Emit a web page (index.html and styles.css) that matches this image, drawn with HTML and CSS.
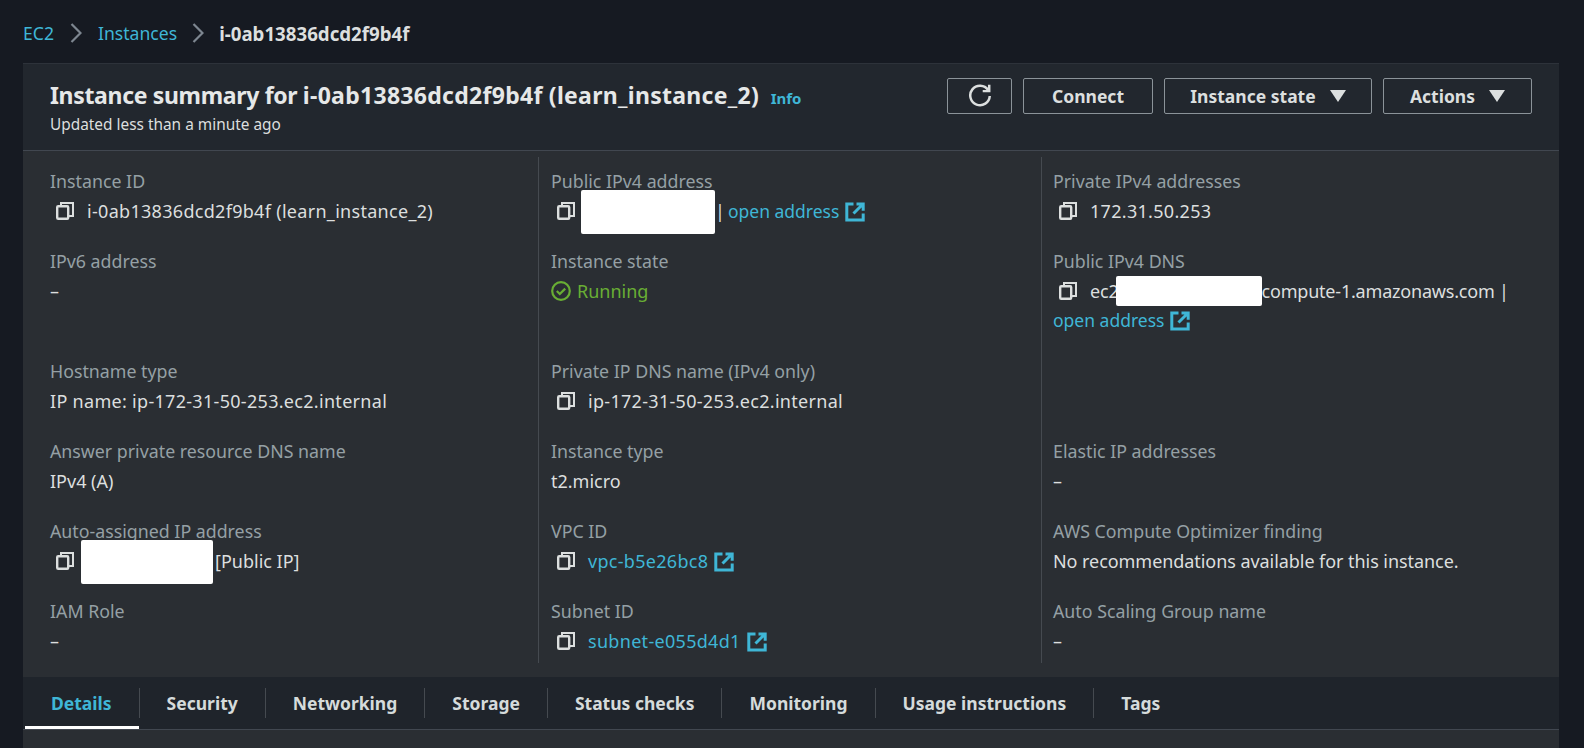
FILE: index.html
```html
<!DOCTYPE html>
<html lang="en">
  <head>
    <title>Instance summary</title>
    <link rel="stylesheet" href="styles.css">
  </head>
  <body>
    <svg class="sprite" width="0" height="0">
      <symbol id="copy" viewBox="0 0 18 18">
        <path d="M5 4V1h12v13h-4" fill="none" stroke="currentColor" stroke-width="2"/>
        <rect x="1.2" y="4.2" width="11" height="12.6" rx="1" fill="none" stroke="currentColor" stroke-width="2.4"/>
      </symbol>
      <symbol id="external" viewBox="0 0 20 20">
        <path d="M8.5 2H1.8v16h16.4v-6.5M11.5 2h6.7v6.7M18 2l-9.5 9.5" fill="none" stroke="currentColor" stroke-width="3"/>
      </symbol>
    </svg>

    <nav class="crumbs">
      <a href="#">EC2</a>
      <svg class="crumb-sep first" viewBox="0 0 12 20"><path d="M1.5 1l9 9-9 9" fill="none" stroke="currentColor" stroke-width="2.2"/></svg>
      <a href="#">Instances</a>
      <svg class="crumb-sep" viewBox="0 0 12 20"><path d="M1.5 1l9 9-9 9" fill="none" stroke="currentColor" stroke-width="2.2"/></svg>
      <span class="crumb-current">i-0ab13836dcd2f9b4f</span>
    </nav>

    <section class="panel">
      <header class="panel-head">
        <div>
          <h1>Instance summary for <span class="title-id">i-0ab13836dcd2f9b4f (learn_instance_2)</span> <a class="info" href="#">Info</a></h1>
          <p class="updated">Updated less than a minute ago</p>
        </div>
        <div class="actions">
          <button class="btn btn-icon" type="button">
            <svg width="24" height="26" viewBox="0 0 22 24"><path d="M18.5 6.5A9 9 0 1 0 20 12M19.5 1.5v6h-6" fill="none" stroke="currentColor" stroke-width="2.3"/></svg>
          </button>
          <button class="btn btn-connect" type="button">Connect</button>
          <button class="btn btn-state" type="button">Instance state <span class="caret"></span></button>
          <button class="btn btn-actions" type="button">Actions <span class="caret"></span></button>
        </div>
      </header>

      <div class="fields">
        <div class="field">
          <div class="label">Instance ID</div>
          <div class="value id"><svg class="copy"><use href="#copy"/></svg>i-0ab13836dcd2f9b4f (learn_instance_2)</div>
        </div>
        <div class="field">
          <div class="label">Public IPv4 address</div>
          <div class="value"><svg class="copy"><use href="#copy"/></svg><span class="redact redact-ip"></span><span class="pipe">|</span><a href="#">open address<svg class="external"><use href="#external"/></svg></a></div>
        </div>
        <div class="field">
          <div class="label">Private IPv4 addresses</div>
          <div class="value id"><svg class="copy"><use href="#copy"/></svg>172.31.50.253</div>
        </div>

        <div class="field">
          <div class="label">IPv6 address</div>
          <div class="value plain">–</div>
        </div>
        <div class="field">
          <div class="label">Instance state</div>
          <div class="value plain running">
            <svg class="check" viewBox="0 0 20 20"><circle cx="10" cy="10" r="8.8" fill="none" stroke="currentColor" stroke-width="2.2"/><path d="M5.8 10l3 3 5.4-5.4" fill="none" stroke="currentColor" stroke-width="2.2"/></svg>Running
          </div>
        </div>
        <div class="field">
          <div class="label">Public IPv4 DNS</div>
          <div class="value dns"><svg class="copy"><use href="#copy"/></svg>ec2<span class="redact redact-dns"></span>compute-1.amazonaws.com |</div>
          <div class="value plain value-wrap"><a href="#">open address<svg class="external"><use href="#external"/></svg></a></div>
        </div>

        <div class="field">
          <div class="label">Hostname type</div>
          <div class="value plain id">IP name: ip-172-31-50-253.ec2.internal</div>
        </div>
        <div class="field">
          <div class="label">Private IP DNS name (IPv4 only)</div>
          <div class="value id"><svg class="copy"><use href="#copy"/></svg>ip-172-31-50-253.ec2.internal</div>
        </div>
        <div class="field"></div>

        <div class="field">
          <div class="label">Answer private resource DNS name</div>
          <div class="value plain">IPv4 (A)</div>
        </div>
        <div class="field">
          <div class="label">Instance type</div>
          <div class="value plain">t2.micro</div>
        </div>
        <div class="field">
          <div class="label">Elastic IP addresses</div>
          <div class="value plain">–</div>
        </div>

        <div class="field">
          <div class="label">Auto-assigned IP address</div>
          <div class="value"><svg class="copy"><use href="#copy"/></svg><span class="redact redact-auto"></span>[Public IP]</div>
        </div>
        <div class="field">
          <div class="label">VPC ID</div>
          <div class="value id"><svg class="copy"><use href="#copy"/></svg><a href="#">vpc-b5e26bc8<svg class="external"><use href="#external"/></svg></a></div>
        </div>
        <div class="field">
          <div class="label">AWS Compute Optimizer finding</div>
          <div class="value plain findings">No recommendations available for this instance.</div>
        </div>

        <div class="field last">
          <div class="label">IAM Role</div>
          <div class="value plain">–</div>
        </div>
        <div class="field last">
          <div class="label">Subnet ID</div>
          <div class="value id"><svg class="copy"><use href="#copy"/></svg><a href="#">subnet-e055d4d1<svg class="external"><use href="#external"/></svg></a></div>
        </div>
        <div class="field last">
          <div class="label">Auto Scaling Group name</div>
          <div class="value plain">–</div>
        </div>
      </div>

      <ul class="tabs">
        <li class="tab active">Details</li>
        <li class="tab">Security</li>
        <li class="tab">Networking</li>
        <li class="tab">Storage</li>
        <li class="tab">Status checks</li>
        <li class="tab">Monitoring</li>
        <li class="tab">Usage instructions</li>
        <li class="tab">Tags</li>
      </ul>
    </section>
  </body>
</html>
```

FILE: styles.css
```css
html, body {
  height: 100%;
}

body {
  background: #161a22;
  color: #dcdfdf;
  font-family: "Noto Sans", sans-serif;
  font-size: 18px;
  margin: 0;
  overflow: hidden;
}

a {
  color: #3fb6d6;
  text-decoration: none;
}

.sprite {
  display: block;
  height: 0;
}

.crumbs {
  align-items: center;
  box-sizing: border-box;
  display: flex;
  font-size: 17.6px;
  gap: 15px;
  height: 63px;
  padding: 3px 0 0 23px;
}

.crumb-sep {
  color: #7d8690;
  height: 20px;
  width: 12px;
}

.crumb-sep.first {
  margin: 0 1px;
}

.crumb-current {
  font-size: 18.7px;
  font-weight: 700;
}

.panel {
  background: #2a2e33;
  margin-left: 23px;
  min-height: 685px;
  width: 1536px;
}

.panel-head {
  align-items: flex-start;
  background: #22272e;
  border-bottom: 1px solid #414750;
  border-top: 1px solid #2d323a;
  box-sizing: border-box;
  display: flex;
  height: 88px;
  justify-content: space-between;
  padding: 13px 27px 0 27px;
}

h1 {
  color: #e6e8e8;
  font-size: 23px;
  font-weight: 700;
  letter-spacing: -.33px;
  line-height: 36px;
  margin: 0;
}

.title-id {
  letter-spacing: .29px;
}

.info {
  font-size: 15px;
  font-weight: 700;
  letter-spacing: 0;
  margin-left: 6px;
}

.updated {
  font-size: 15.4px;
  line-height: 18px;
  margin: 0;
}

.actions {
  display: flex;
  gap: 11px;
  margin-top: 1px;
}

.btn {
  align-items: center;
  background: transparent;
  border: 1px solid #8b9399;
  border-radius: 2px;
  box-sizing: border-box;
  color: #dcdfdf;
  display: flex;
  font-family: inherit;
  font-size: 17.5px;
  font-weight: 700;
  gap: 14px;
  height: 36px;
  justify-content: center;
  padding: 0;
}

.btn-icon {
  width: 65px;
}

.btn-connect {
  width: 130px;
}

.btn-state {
  width: 208px;
}

.btn-actions {
  width: 149px;
}

.caret {
  border-left: 8px solid transparent;
  border-right: 8px solid transparent;
  border-top: 12px solid #dcdfdf;
}

.fields {
  display: grid;
  grid-template-columns: 515px 503px 518px;
  margin-top: 6px;
}

.field {
  border-left: 1px solid #454a50;
  box-sizing: border-box;
  padding: 0 12px 23px;
}

.field:nth-child(3n) {
  padding-left: 11px;
}

.field:nth-child(3n+1) {
  border-left: 0;
  padding-left: 27px;
}

.field:nth-child(-n+3) {
  padding-top: 12px;
}

.field.last {
  padding-bottom: 7px;
}

.label {
  color: #95a0a5;
  font-size: 17.8px;
  line-height: 24px;
}

.value {
  align-items: center;
  display: flex;
  height: 30px;
  margin-top: 3px;
  padding-left: 6px;
  white-space: nowrap;
}

.value.plain {
  padding-left: 0;
}

.value.value-wrap {
  margin: -1px 0 1px;
}

.value a {
  font-size: 17.5px;
}

.value.id {
  letter-spacing: .3px;
}

.value.id a {
  font-size: 18px;
}

.value.dns {
  letter-spacing: -.2px;
}

.value.findings {
  letter-spacing: -.06px;
}

.copy {
  color: #dcdfdf;
  flex: none;
  height: 18px;
  margin-right: 13px;
  width: 18px;
}

.external {
  color: #3fb6d6;
  height: 20px;
  margin-left: 6px;
  vertical-align: -4px;
  width: 20px;
}

.redact {
  background: #fff;
  border-radius: 2px;
  display: inline-block;
}

.redact-ip {
  height: 44px;
  margin: 2px 0 0 -7px;
  width: 134px;
}

.redact-dns {
  height: 30px;
  margin-left: -3px;
  width: 146px;
}

.redact-auto {
  height: 44px;
  margin: 2px 2px 0 -6px;
  width: 132px;
}

.pipe {
  margin: 0 3px 0 0;
}

.running {
  color: #69ae34;
}

.check {
  height: 20px;
  margin-right: 6px;
  width: 20px;
}

.tabs {
  background: #1f242b;
  border-bottom: 1px solid #414750;
  display: flex;
  height: 52px;
  list-style: none;
  margin: 14px 0 0;
  padding: 0 0 0 2px;
}

.tab {
  align-items: center;
  color: #d5dbdb;
  display: flex;
  font-size: 17.5px;
  font-weight: 700;
  padding: 0 27px 0 28px;
  position: relative;
}

.tab + .tab::before {
  background: #454a50;
  content: "";
  height: 30px;
  left: 0;
  position: absolute;
  top: 11px;
  width: 1px;
}

.tab.active {
  box-shadow: inset 0 -3px 0 #fff;
  color: #3fb6d6;
  padding-left: 26px;
}
```
